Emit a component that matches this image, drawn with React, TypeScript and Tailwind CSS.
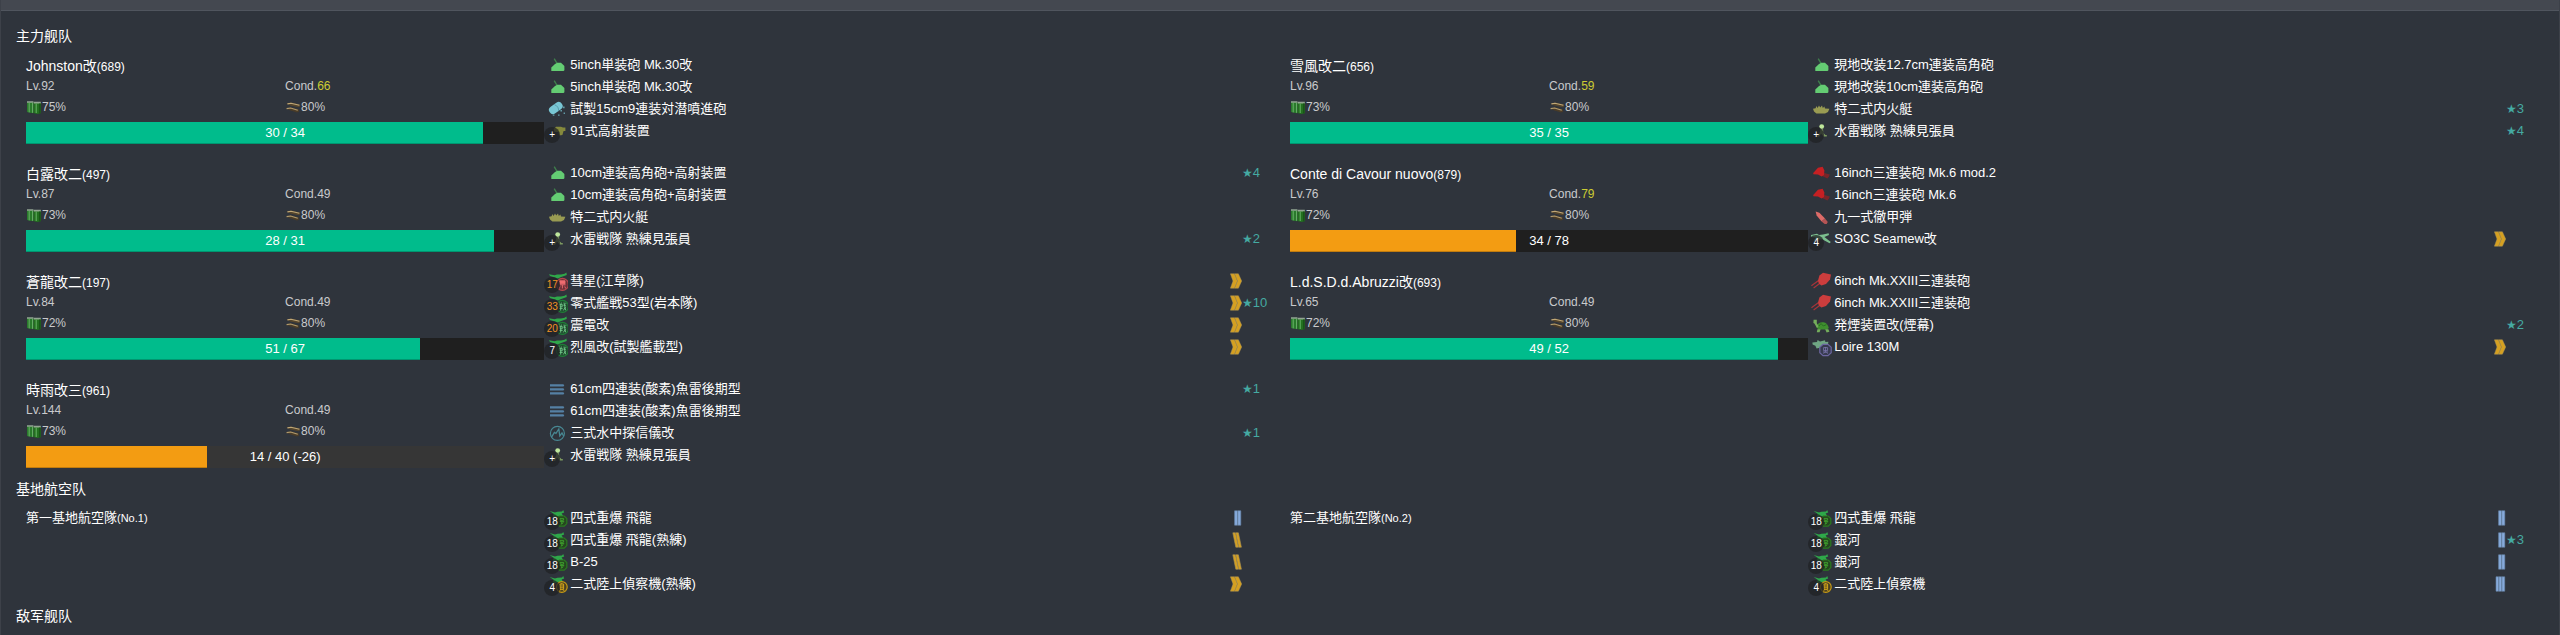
import React from 'react';

type IconKind =
  | 'highAngle'
  | 'depth'
  | 'aaDevice'
  | 'boat'
  | 'lookout'
  | 'bomber'
  | 'fighter'
  | 'torpedo'
  | 'sonar'
  | 'largeGun'
  | 'shell'
  | 'seaplane'
  | 'mediumGun'
  | 'smoke'
  | 'flyingBoat'
  | 'landAttack'
  | 'landRecon';

type Proficiency = 'chevron' | 'slash' | 'bars2' | 'bars3';

interface Equip {
  icon: IconKind;
  name: string;
  badge?: string;
  hot?: boolean;
  prof?: Proficiency;
  star?: number;
}

interface Ship {
  name: string;
  id: number;
  level: number;
  cond: number;
  fuel: number;
  ammo: number;
  hp: number;
  maxHp: number;
  note?: string;
  equips: Equip[];
}

interface AirBase {
  name: string;
  no: number;
  equips: Equip[];
}

const lookout: Equip = { icon: 'lookout', name: '水雷戦隊 熟練見張員', badge: '+' };

const ships: Ship[] = [
  {
    name: 'Johnston改', id: 689, level: 92, cond: 66, fuel: 75, ammo: 80, hp: 30, maxHp: 34,
    equips: [
      { icon: 'highAngle', name: '5inch単装砲 Mk.30改' },
      { icon: 'highAngle', name: '5inch単装砲 Mk.30改' },
      { icon: 'depth', name: '試製15cm9連装対潜噴進砲' },
      { icon: 'aaDevice', name: '91式高射装置', badge: '+' },
    ],
  },
  {
    name: '雪風改二', id: 656, level: 96, cond: 59, fuel: 73, ammo: 80, hp: 35, maxHp: 35,
    equips: [
      { icon: 'highAngle', name: '現地改装12.7cm連装高角砲' },
      { icon: 'highAngle', name: '現地改装10cm連装高角砲' },
      { icon: 'boat', name: '特二式内火艇', star: 3 },
      { ...lookout, star: 4 },
    ],
  },
  {
    name: '白露改二', id: 497, level: 87, cond: 49, fuel: 73, ammo: 80, hp: 28, maxHp: 31,
    equips: [
      { icon: 'highAngle', name: '10cm連装高角砲+高射装置', star: 4 },
      { icon: 'highAngle', name: '10cm連装高角砲+高射装置' },
      { icon: 'boat', name: '特二式内火艇' },
      { ...lookout, star: 2 },
    ],
  },
  {
    name: 'Conte di Cavour nuovo', id: 879, level: 76, cond: 79, fuel: 72, ammo: 80, hp: 34, maxHp: 78,
    equips: [
      { icon: 'largeGun', name: '16inch三連装砲 Mk.6 mod.2' },
      { icon: 'largeGun', name: '16inch三連装砲 Mk.6' },
      { icon: 'shell', name: '九一式徹甲弾' },
      { icon: 'seaplane', name: 'SO3C Seamew改', badge: '4', prof: 'chevron' },
    ],
  },
  {
    name: '蒼龍改二', id: 197, level: 84, cond: 49, fuel: 72, ammo: 80, hp: 51, maxHp: 67,
    equips: [
      { icon: 'bomber', name: '彗星(江草隊)', badge: '17', hot: true, prof: 'chevron' },
      { icon: 'fighter', name: '零式艦戦53型(岩本隊)', badge: '33', hot: true, prof: 'chevron', star: 10 },
      { icon: 'fighter', name: '震電改', badge: '20', hot: true, prof: 'chevron' },
      { icon: 'fighter', name: '烈風改(試製艦載型)', badge: '7', prof: 'chevron' },
    ],
  },
  {
    name: 'L.d.S.D.d.Abruzzi改', id: 693, level: 65, cond: 49, fuel: 72, ammo: 80, hp: 49, maxHp: 52,
    equips: [
      { icon: 'mediumGun', name: '6inch Mk.XXIII三連装砲' },
      { icon: 'mediumGun', name: '6inch Mk.XXIII三連装砲' },
      { icon: 'smoke', name: '発煙装置改(煙幕)', star: 2 },
      { icon: 'flyingBoat', name: 'Loire 130M', prof: 'chevron' },
    ],
  },
  {
    name: '時雨改三', id: 961, level: 144, cond: 49, fuel: 73, ammo: 80, hp: 14, maxHp: 40, note: '(-26)',
    equips: [
      { icon: 'torpedo', name: '61cm四連装(酸素)魚雷後期型', star: 1 },
      { icon: 'torpedo', name: '61cm四連装(酸素)魚雷後期型' },
      { icon: 'sonar', name: '三式水中探信儀改', star: 1 },
      lookout,
    ],
  },
];

const bases: AirBase[] = [
  {
    name: '第一基地航空隊', no: 1,
    equips: [
      { icon: 'landAttack', name: '四式重爆 飛龍', badge: '18', prof: 'bars2' },
      { icon: 'landAttack', name: '四式重爆 飛龍(熟練)', badge: '18', prof: 'slash' },
      { icon: 'landAttack', name: 'B-25', badge: '18', prof: 'slash' },
      { icon: 'landRecon', name: '二式陸上偵察機(熟練)', badge: '4', prof: 'chevron' },
    ],
  },
  {
    name: '第二基地航空隊', no: 2,
    equips: [
      { icon: 'landAttack', name: '四式重爆 飛龍', badge: '18', prof: 'bars2' },
      { icon: 'landAttack', name: '銀河', badge: '18', prof: 'bars2', star: 3 },
      { icon: 'landAttack', name: '銀河', badge: '18', prof: 'bars2' },
      { icon: 'landRecon', name: '二式陸上偵察機', badge: '4', prof: 'bars3' },
    ],
  },
];

const carrierPlane = (
  <path d="M5 4.2 L10.5 5.2 L13 4.6 L17 4.6 L20.6 3.8 L22.4 2.4 L22.8 5 L20 6 L16.5 7.2 L14 8.6 L11 7.6 L6 6Z" fill="#2fa84a" />
);
const landPlane = (
  <path d="M5.6 4 L11 5.4 L13.4 4.8 L18 4.4 L19.2 3 L20.2 5.4 L17.6 6.6 L19.6 9.6 L15 9 L10 10.4 L8.6 8.6 L10 7Z" fill="#2fa84a" />
);
const seaPlane = (
  <path d="M3 7 L9 5.8 L11 7 L15 6.4 L20.6 5.2 L21 7 L16.4 9 L22.8 14 L21.6 15.2 L14.6 11.4 L9.6 11.2 L7 13 L5.6 12.4 L8 9.6 L3 9Z" fill="#7cbf8f" />
);

const drawings: Record<IconKind, React.ReactNode> = {
  highAngle: (
    <>
      <path d="M10.2 4.6 L13.4 10" stroke="#3f7f4c" strokeWidth="1.4" />
      <path d="M7.3 17 V13.6 L11 10 L13.4 8.8 H17 L20.4 12 V16.2 L19.6 17Z" fill="#64cc73" />
    </>
  ),
  depth: (
    <>
      <path d="M9 12 L14.6 8" stroke="#79c6d4" strokeWidth="8" strokeLinecap="round" />
      <path d="M10.4 6.6 Q15 8.4 14.6 13.2" stroke="#4f93a2" strokeWidth="0.8" fill="none" />
      <path d="M19 8.6h1.6v1.6h-1.6zM19.6 14.4h1.4v1.6h-1.4zM16.4 12h1.6v1.6h-1.6zM8.8 16.6h1.6v1.2h-1.6zM14 16.4h1.6v1.4h-1.6z" fill="#79c6d4" opacity="0.7" />
    </>
  ),
  aaDevice: (
    <path d="M9.6 9 L12 6.8 H17 L19 7.4 H21.4 V11 H19.6 L18.4 15 L15 15.4 L14.6 12 L10.6 12Z" fill="#85893c" />
  ),
  boat: (
    <path d="M5 10.8 L7.6 10.2 L8.4 8 L9.6 10 L11 7.4 L12.2 9.6 L14 7.4 L14.8 10 L16.4 8.4 L17 10.4 L21.4 10.8 L20 14 L17 15.4 H8.4 L6 13.6Z" fill="#999b52" />
  ),
  lookout: (
    <>
      <circle cx="13.7" cy="6.6" r="2.4" fill="#bfe79c" />
      <path d="M12.6 8.6 L15 9 L15.4 13 L17.4 15 H18.8 V16.4 H15.6 L13 13.4 L11 17 L9 16.4 L12 12Z" fill="#7d9960" />
    </>
  ),
  bomber: carrierPlane,
  fighter: carrierPlane,
  torpedo: (
    <path d="M6 6.2h13.4l.9 1.2-.9 1.2H6zM6 10.2h13.4l.9 1.2-.9 1.2H6zM6 14.2h13.4l.9 1.2-.9 1.2H6z" fill="#5580a4" />
  ),
  sonar: (
    <>
      <circle cx="13.4" cy="11.4" r="7" fill="none" stroke="#488893" strokeWidth="1.2" />
      <path d="M7.4 15.4 L10.4 10.4 L12 11.4 L14.8 7 L15.8 13.8 L18 11 L19.6 14" fill="none" stroke="#488893" strokeWidth="1.3" />
    </>
  ),
  largeGun: (
    <>
      <path d="M14.6 10.4 L21.8 12.4 L21 14.4 L19.4 16.6 L13 13.4Z" fill="#792529" />
      <path d="M5.2 11 L10 5.8 L14.6 4.8 L16.4 8.6 L16 13 L13.6 14.4 L10 12.4 L5.4 12.2Z" fill="#c52023" />
    </>
  ),
  shell: (
    <>
      <path d="M7.6 5.6 L11.4 6.8 L17 12.4 L13.6 15.6 L8.6 9.6Z" fill="#dd6b68" />
      <path d="M17 12.4 L19.8 16 L18.6 18 L16.6 18 L13.6 15.6Z" fill="#b55454" />
    </>
  ),
  seaplane: seaPlane,
  mediumGun: (
    <>
      <path d="M3.4 15.8 L10.6 10.4 M5.6 18 L13 12.4" stroke="#a83439" strokeWidth="1.2" />
      <path d="M10 10.4 L11.4 5.6 L15 2.8 L23 4.4 L22 9.6 L18 14 L13.4 15.6 L10.8 13.4Z" fill="#cc3d3d" />
    </>
  ),
  smoke: (
    <>
      <path d="M8 12.6 Q10.6 7.6 15.4 8.2 Q19.6 8.8 20.8 14 L19 15.4 H10.4Z" fill="#3f8f2f" />
      <path d="M10.6 12.4 L13 9.6 L15.4 12 L18.4 10.6" stroke="#276a20" strokeWidth="0.9" fill="none" />
      <path d="M5.6 5.8h3.2v3.4l1.8 3.4-1.6 1.4-2.6-4.4-1-.6z" fill="#74ad5c" />
      <path d="M9.4 15.2h3.2l-1 3H8.8zM17.2 15.2h3.2l1 2.6-2.8.6z" fill="#74ad5c" />
    </>
  ),
  flyingBoat: (
    <path d="M4.4 6.4 L9 6 L9.6 4 L12 5.4 L17 4.2 L17.4 6 L20.4 5.8 L20 8 L17.6 8.6 L16.6 12 L13 11.4 L8.6 12.4 L7.4 9.8 L4.6 8.6Z" fill="#6fa583" />
  ),
  landAttack: landPlane,
  landRecon: landPlane,
};

const marks: Partial<Record<IconKind, React.ReactNode>> = {
  bomber: (
    <>
      <circle cx="18.4" cy="14.4" r="6" fill="#6c3138" stroke="#b7474e" strokeWidth="1.2" />
      <path d="M15.8 10.8h5.2v3h-5.2zM15.2 14.8h6.4M16 16.4l-.8 2.2M18.4 15v3.4M20.8 16.4l.8 2M16.6 12.4h3.6" fill="#ee6d70" stroke="#ee6d70" strokeWidth="0.9" />
    </>
  ),
  fighter: (
    <>
      <circle cx="18.4" cy="14.4" r="6" fill="#1f4a2e" stroke="#1f7f37" strokeWidth="1.2" />
      <path d="M15.4 10.6l.6 1M17.4 10.6v1M15.2 12.4h3v2.4h-3zM15 16.4h3.6M16.7 12.2v6.4M19.4 13.2h2.6M20 10.6l1.6 7.6M21.6 14.8l-2.2 3.6M21.4 10.8l.6 1" fill="none" stroke="#72c98a" strokeWidth="0.9" />
    </>
  ),
  landAttack: (
    <>
      <path d="M15.4 9h4.8l2.6 2.6v5l-2.6 2.6h-4.8l-2.6-2.6v-5z" fill="#25461f" stroke="#2a7a20" strokeWidth="1.2" />
      <path d="M16 11.4h3.6v1.8H16zM15.4 14.4h4.8M17.8 13v4M19.4 15.6l-2.6 1.8" fill="none" stroke="#3d9a2c" strokeWidth="1" />
    </>
  ),
  landRecon: (
    <>
      <circle cx="17.8" cy="14" r="5.4" fill="#4c4122" stroke="#c79a14" strokeWidth="1.2" />
      <path d="M16 11h3.6v5.4H16zM16 13h3.6M16 14.8h3.6M17.8 10v1.4M16.4 16.6l-1 1.4M19.2 16.6l1 1.4" fill="none" stroke="#dcab18" strokeWidth="0.9" />
    </>
  ),
  flyingBoat: (
    <>
      <path d="M15 8.4h5l3.2 2.8v5.6L20 19.6h-5l-3.2-2.8v-5.6z" fill="#373b50" stroke="#6c66a0" strokeWidth="1.2" />
      <path d="M15.6 11.6h4v3h-4zM15 16h5M17.6 11v5.6M15.6 17.6l1-1.4M19.6 17.6l-1-1.4" fill="none" stroke="#7d77b0" strokeWidth="0.8" />
    </>
  ),
};

const proficiencies: Record<Proficiency, React.ReactNode> = {
  chevron: (
    <g fill="#d5a021" stroke="#a89258" strokeWidth="0.5">
      <path d="M0.4 0.8h4L7.4 8l-3 7.2h-4L3 8z" />
      <path d="M4.6 0.8h3.8L11.7 8l-3.3 7.2H4.6L7.6 8z" />
    </g>
  ),
  slash: (
    <g fill="#d5a021" stroke="#a89258" strokeWidth="0.6">
      <path d="M2.8 0.8h2.6l3 14.4H5.8z" />
      <path d="M5.8 0.8h2.6l3 14.4H8.8z" />
    </g>
  ),
  bars2: (
    <g fill="#86aadb" stroke="#6684a8" strokeWidth="0.6">
      <path d="M4.6 0.8h2.9v14.4H4.6zM7.9 0.8h2.9v14.4H7.9z" />
    </g>
  ),
  bars3: (
    <g fill="#86aadb" stroke="#6684a8" strokeWidth="0.6">
      <path d="M2 0.8h2.7v14.4H2zM5 0.8h2.7v14.4H5zM8 0.8h2.7v14.4H8z" />
    </g>
  ),
};

function FuelIcon() {
  return (
    <svg width="16" height="16" viewBox="0 0 16 16" aria-hidden="true">
      <path d="M1 3h6.4v11.2L4 13.8 1 13z" fill="#2a7a2c" />
      <path d="M7.6 3.4H14.8v10.8L11 15l-3.4-1z" fill="#23701f" />
      <path d="M1 2.2h6.4v1.6H1zM7.8 2.8h7v1.6h-7z" fill="#93a592" />
      <path d="M3.2 4v9.4M6.6 4v9.8M10.2 4.6v9.4" stroke="#6bb36a" strokeWidth="1" />
      <path d="M13.8 4.6v9.6" stroke="#185418" strokeWidth="1.4" />
    </svg>
  );
}

function AmmoIcon() {
  return (
    <svg width="16" height="16" viewBox="0 0 16 16" aria-hidden="true">
      <path d="M1.4 4.8L6 3.4l9 2v2.2l-1.4.6L6 6.8z" fill="#55452c" />
      <path d="M1 9.4l4.6-1.2 8.4 2.2v2.4l-2 .8-7.2-2.4z" fill="#4a3c28" />
      <path d="M2.4 4.9L6 4.2l8.4 2" stroke="#c0a878" strokeWidth="1.1" fill="none" />
      <path d="M1.6 9.6l4-.6 7.2 2.2" stroke="#b39b6c" strokeWidth="1.2" fill="none" />
    </svg>
  );
}

function EquipRow({ equip }: { equip: Equip }) {
  return (
    <li className="flex h-[22px] items-center text-[13px]">
      <span className="relative mr-0.5 h-[22px] w-6 shrink-0">
        <svg width="24" height="22" viewBox="0 0 24 22" className="block" aria-hidden="true">
          {drawings[equip.icon]}
          {marks[equip.icon]}
        </svg>
        {equip.badge && (
          <span
            className={`absolute left-0 top-[7px] flex size-4 items-center justify-center rounded-full bg-[#202124]/75 text-[10px] leading-none ${
              equip.hot ? 'text-[#f39224]' : 'text-white'
            }`}
          >
            {equip.badge}
          </span>
        )}
      </span>
      <span className="min-w-0 flex-1 truncate leading-[22px]">{equip.name}</span>
      <span className="w-3 shrink-0">
        {equip.prof && (
          <svg width="12" height="16" viewBox="0 0 12 16" className="block" aria-hidden="true">
            {proficiencies[equip.prof]}
          </svg>
        )}
      </span>
      <span className="w-12 shrink-0 leading-5 text-[#45aaa2]">
        {equip.star && (
          <>
            <span className="text-[12px] font-['DejaVu_Sans',sans-serif]">★</span>
            {equip.star}
          </>
        )}
      </span>
    </li>
  );
}

function HpBar({ ship }: { ship: Ship }) {
  const ratio = ship.hp / ship.maxHp;
  return (
    <div
      role="meter"
      aria-label={`${ship.name} HP`}
      aria-valuemin={0}
      aria-valuemax={ship.maxHp}
      aria-valuenow={ship.hp}
      className={`relative mt-1 h-[22px] ${ship.note ? 'bg-[#363636]' : 'bg-[#1f1f1f]'}`}
    >
      <div
        className={`h-full border-b border-black/20 ${ratio > 0.5 ? 'bg-[#00bc8c]' : 'bg-[#f39c12]'}`}
        style={{ width: `${ratio * 100}%` }}
      />
      <span className="absolute inset-0 text-center text-[13px] leading-[21px]">
        {ship.hp} / {ship.maxHp} {ship.note}
      </span>
    </div>
  );
}

function ShipCard({ ship }: { ship: Ship }) {
  return (
    <article className="flex">
      <div className="w-[41%] shrink-0 pt-0.5">
        <h3 className="h-5 text-[14px] leading-5">
          {ship.name}
          <span className="text-[12px]">({ship.id})</span>
        </h3>
        <div className="grid grid-cols-2 text-[12px] text-[#c9cacc]">
          <span className="leading-5">Lv.{ship.level}</span>
          <span className="leading-5">
            Cond.<span className={ship.cond > 49 ? 'text-[#cccc33]' : ''}>{ship.cond}</span>
          </span>
          <span className="flex h-[22px] items-center">
            <FuelIcon />
            {ship.fuel}%
          </span>
          <span className="flex h-[22px] items-center">
            <AmmoIcon />
            {ship.ammo}%
          </span>
        </div>
        <HpBar ship={ship} />
      </div>
      <ul className="min-w-0 flex-1">
        {ship.equips.map((equip, i) => (
          <EquipRow key={i} equip={equip} />
        ))}
      </ul>
    </article>
  );
}

function BaseCard({ base }: { base: AirBase }) {
  return (
    <article className="flex">
      <h3 className="w-[41%] shrink-0 text-[13px] leading-[22px]">
        {base.name}
        <span className="text-[11px]">(No.{base.no})</span>
      </h3>
      <ul className="min-w-0 flex-1">
        {base.equips.map((equip, i) => (
          <EquipRow key={i} equip={equip} />
        ))}
      </ul>
    </article>
  );
}

function Section({ title, children }: { title: string; children?: React.ReactNode }) {
  return (
    <section className="pb-[9px]">
      <h2
        lang="zh-CN"
        className="mb-1.5 pl-[15px] text-[14px] leading-6 font-['Liberation_Sans','Noto_Sans_CJK_SC',sans-serif]"
      >
        {title}
      </h2>
      {children && <div className="grid grid-cols-2 gap-y-[18px] pl-[25px] pr-[5px]">{children}</div>}
    </section>
  );
}

export default function App() {
  return (
    <div
      lang="ja"
      className="min-h-screen border-x border-[#3d4149] bg-[#2f343c] text-white font-['Liberation_Sans','Noto_Sans_CJK_JP',sans-serif]"
    >
      <div className="h-[11px] border-b border-[#50555e] bg-[#444850]" />
      <main className="pt-[13px]">
        <Section title="主力舰队">
          {ships.map((ship) => (
            <ShipCard key={ship.id} ship={ship} />
          ))}
        </Section>
        <Section title="基地航空队">
          {bases.map((base) => (
            <BaseCard key={base.no} base={base} />
          ))}
        </Section>
        <Section title="敌军舰队" />
      </main>
    </div>
  );
}
